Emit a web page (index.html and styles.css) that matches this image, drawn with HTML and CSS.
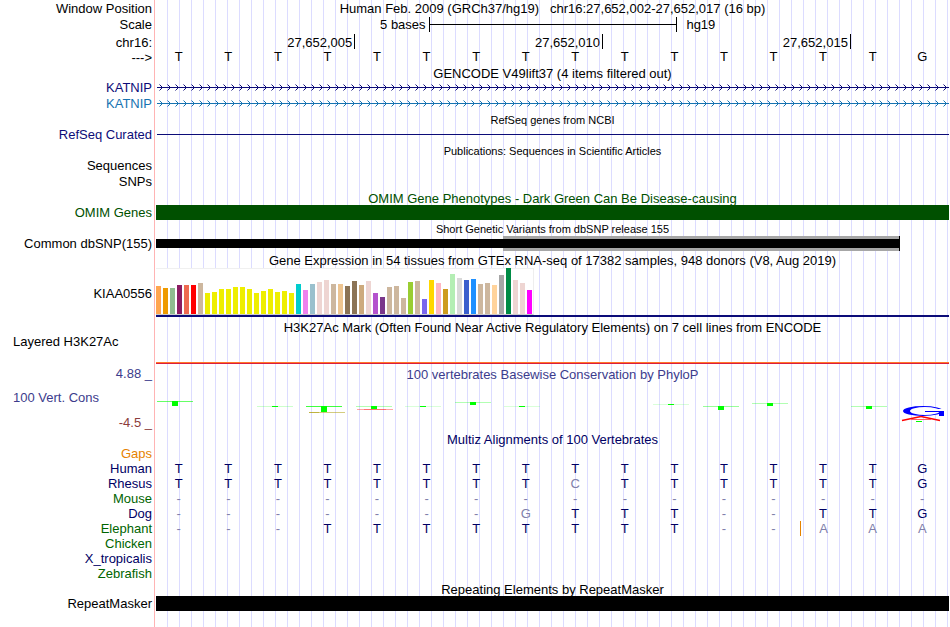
FILE: index.html
```html
<!DOCTYPE html>
<html lang="en">
  <head>
    <meta charset="UTF-8" />
    <meta name="viewport" content="width=device-width, initial-scale=1.0" />
    <title>Genome Browser hg19 chr16:27,652,002-27,652,017</title>
    <link rel="stylesheet" href="styles.css">
  </head>
  <body>
    <div class="browser">
      <div class="row">
        <div class="label title-label">Window Position</div>
        <div class="view title">Human Feb. 2009 (GRCh37/hg19)&nbsp;&nbsp; chr16:27,652,002-27,652,017 (16 bp)</div>
      </div>
      <div class="row scale-row">
        <div class="label">Scale</div>
        <div class="view scale">
          <span class="scale-size">5 bases</span>
          <span class="scale-bar"></span>
          <span class="scale-db">hg19</span>
        </div>
      </div>
      <div class="row ruler-row">
        <div class="label">chr16:</div>
        <div class="view ruler">
          <span>27,652,005</span>
          <span>27,652,010</span>
          <span>27,652,015</span>
          <span></span>
        </div>
      </div>
      <div class="row short">
        <div class="label title-label">---&gt;</div>
        <div class="view bases" data-seq="TTTTTTTTTTTTTTTG"></div>
      </div>

      <div class="row short gap">
        <div class="view title">GENCODE V49lift37 (4 items filtered out)</div>
      </div>
      <div class="row navy">
        <div class="label">KATNIP</div>
        <svg class="view gene" height="16">
          <defs>
            <pattern id="arrows" width="8" height="16" patternUnits="userSpaceOnUse">
              <path d="M3.5 4.5l3 3-3 3" fill="none" stroke="#0c0c78" />
            </pattern>
          </defs>
          <rect x="1" y="7" width="100%" height="1" fill="#0c0c78" />
          <rect width="100%" height="16" fill="url(#arrows)" />
        </svg>
      </div>
      <div class="row blue">
        <div class="label">KATNIP</div>
        <svg class="view gene" height="16">
          <defs>
            <pattern id="arrowsBlue" width="8" height="16" patternUnits="userSpaceOnUse">
              <path d="M3.5 4.5l3 3-3 3" fill="none" stroke="#1673b1" />
            </pattern>
          </defs>
          <rect x="1" y="7" width="100%" height="1" fill="#1673b1" />
          <rect width="100%" height="16" fill="url(#arrowsBlue)" />
        </svg>
      </div>

      <div class="row short">
        <div class="view title small">RefSeq genes from NCBI</div>
      </div>
      <div class="row short navy">
        <div class="label">RefSeq Curated</div>
        <div class="view"><div class="intron"></div></div>
      </div>

      <div class="row short gap">
        <div class="view title small">Publications: Sequences in Scientific Articles</div>
      </div>
      <div class="row"><div class="label">Sequences</div></div>
      <div class="row"><div class="label">SNPs</div></div>

      <div class="row short green">
        <div class="view title">OMIM Gene Phenotypes - Dark Green Can Be Disease-causing</div>
      </div>
      <div class="row short green">
        <div class="label">OMIM Genes</div>
        <div class="view block green-block"></div>
      </div>

      <div class="row short gap">
        <div class="view title small">Short Genetic Variants from dbSNP release 155</div>
      </div>
      <div class="row short">
        <div class="label">Common dbSNP(155)</div>
        <div class="view snp">
          <div class="snp-left"></div>
          <div class="snp-right"></div>
        </div>
      </div>

      <div class="row short gap">
        <div class="view title">Gene Expression in 54 tissues from GTEx RNA-seq of 17382 samples, 948 donors (V8, Aug 2019)</div>
      </div>
      <div class="row gtex">
        <div class="label">KIAA0556</div>
        <div class="view gtex-view">
          <div class="tissues" id="tissues"></div>
        </div>
      </div>

      <div class="row short gap-lg">
        <div class="view title">H3K27Ac Mark (Often Found Near Active Regulatory Elements) on 7 cell lines from ENCODE</div>
      </div>
      <div class="row histone">
        <div class="label left">Layered H3K27Ac</div>
        <div class="view histone-view"></div>
      </div>

      <div class="row short gap-lg purple">
        <div class="label">4.88 _</div>
        <div class="view title">100 vertebrates Basewise Conservation by PhyloP</div>
      </div>
      <div class="row cons purple">
        <div class="cons-labels">
          <div class="label left">100 Vert. Cons</div>
          <div class="label red">-4.5 _</div>
        </div>
        <svg class="view" height="50" viewBox="0 0 793 50" preserveAspectRatio="none">
          <g id="logo"></g>
          <!-- last base, G over A -->
          <ellipse cx="767" cy="30" rx="20" ry="5" fill="#00f" />
          <ellipse cx="769" cy="30" rx="15" ry="4" fill="#fff" />
          <rect x="777" y="28" width="12" height="2" fill="#fff" />
          <rect x="769" y="30" width="19" height="1" fill="#00f" />
          <rect x="783" y="30" width="5" height="5" fill="#00f" />
          <line x1="746" y1="39.5" x2="765" y2="35.5" stroke="#f00" stroke-width="1.4" />
          <line x1="765" y1="35.5" x2="784" y2="39.5" stroke="#f00" stroke-width="1.4" />
          <rect x="755" y="38" width="20" height="1" fill="#ff6060" />
          <rect x="760" y="40" width="6" height="1" fill="#0f0" />
        </svg>
      </div>

      <div class="row short dark">
        <div class="view title">Multiz Alignments of 100 Vertebrates</div>
      </div>
      <div class="row short orange"><div class="label">Gaps</div></div>
      <div class="row short dark">
        <div class="label">Human</div>
        <div class="view bases" data-seq="TTTTTTTTTTTTTTTG"></div>
      </div>
      <div class="row short dark">
        <div class="label">Rhesus</div>
        <div class="view bases" data-seq="TTTTTTTTcTTTTTTG"></div>
      </div>
      <div class="row short leaf">
        <div class="label">Mouse</div>
        <div class="view bases" data-seq="----------------"></div>
      </div>
      <div class="row short dark">
        <div class="label">Dog</div>
        <div class="view bases" data-seq="-------gTTT--TTG"></div>
      </div>
      <div class="row short leaf">
        <div class="label">Elephant</div>
        <div class="view bases" data-seq="---TTTTTTTT--|aaa"></div>
      </div>
      <div class="row short leaf"><div class="label">Chicken</div></div>
      <div class="row short dark"><div class="label">X_tropicalis</div></div>
      <div class="row short leaf"><div class="label">Zebrafish</div></div>

      <div class="row short">
        <div class="view title">Repeating Elements by RepeatMasker</div>
      </div>
      <div class="row short">
        <div class="label">RepeatMasker</div>
        <div class="view block"></div>
      </div>
    </div>

    <script>
// lower case = differs from human, | = insert before the next base
document.querySelectorAll(".bases").forEach((row) => {
  let str = "";
  let insert = "";
  for (const c of row.dataset.seq) {
    if (c == "|") {
      insert = " insert";
      continue;
    }
    const type = c == "-" || c != c.toUpperCase() ? "diff" : "same";
    str += `<span class="${type}${insert}">${c.toUpperCase()}</span>`;
    insert = "";
  }
  row.innerHTML = str;
});

const tissues = [
  [28, "#ffa54f"], [26, "#ee9a00"], [26, "#8fbc8f"], [29, "#8b1c62"],
  [29, "#ee6a50"], [29, "#ff0000"], [31, "#cdb79e"], [21, "#eeee00"],
  [22, "#eeee00"], [25, "#eeee00"], [25, "#eeee00"], [27, "#eeee00"],
  [27, "#eeee00"], [25, "#eeee00"], [21, "#eeee00"], [23, "#eeee00"],
  [25, "#eeee00"], [22, "#eeee00"], [23, "#eeee00"], [21, "#eeee00"],
  [30, "#00cdcd"], [24, "#ee82ee"], [30, "#9ac0cd"], [32, "#eed5d2"],
  [34, "#eed5d2"], [30, "#cdb79e"], [30, "#eec591"], [28, "#8b7355"],
  [33, "#8b7355"], [29, "#cdaa7d"], [33, "#eed5d2"], [21, "#b452cd"],
  [17, "#7a378b"], [27, "#cdb79e"], [28, "#cdb79e"], [16, "#cdb79e"],
  [32, "#9acd32"], [33, "#cdb79e"], [15, "#7a67ee"], [34, "#ffd700"],
  [31, "#ffb6c1"], [25, "#cd9b1d"], [40, "#b4eeb4"], [36, "#d9d9d9"],
  [34, "#3a5fcd"], [35, "#1e90ff"], [30, "#cdb79e"], [31, "#cdb79e"],
  [29, "#ffd39b"], [39, "#a6a6a6"], [46, "#008b45"], [34, "#eed5d2"],
  [31, "#eed5d2"], [24, "#ff00ff"],
];
document.getElementById("tissues").innerHTML = tissues
  .map(([h, color]) => `<i style="height:${h}px;background:${color}"></i>`)
  .join("");

// x, y, stem height, bar opacity
const marks = [
  [1, 20, 5, 0.6], [101, 25, 1, 0.2], [150, 25, 6, 0.75], [200, 25, 3, 0.3],
  [249, 25, 1, 0.15], [299, 21, 3, 0.3], [348, 25, 1, 0.15], [497, 23, 1, 0.15],
  [547, 25, 4, 0.4], [596, 22, 3, 0.3], [695, 25, 3, 0.3],
];
let logoStr = marks
  .map(
    ([x, y, h, o]) => `
    <rect x="${x}" y="${y}" width="36" height="1" fill="#0f0" opacity="${o}" />
    <rect x="${x + 15}" y="${y}" width="6" height="${h}" fill="#0f0" />`
  )
  .join("");
logoStr += `
    <rect x="153" y="31" width="36" height="1" fill="#a90" opacity=".5" />
    <rect x="153" y="31" width="10" height="1" fill="#a90" opacity=".5" />
    <rect x="201" y="28" width="36" height="1" fill="#f00" opacity=".35" />
    <rect x="208" y="28" width="22" height="1" fill="#f00" opacity=".3" />`;
document.getElementById("logo").innerHTML = logoStr;
    </script>
  </body>
</html>
```

FILE: styles.css
```css
body {
    margin: 0;
    background: #fff;
    color: #000;
    font-family: "Liberation Sans", Arial, sans-serif;
    font-size: 13px;
}
/* pink divider + guide lines every 12px */
.browser {
    min-height: 100vh;
    padding-right: 1px;
    box-sizing: border-box;
    background:
        linear-gradient(#ffb4b4, #ffb4b4) 154px 0 / 1px 100% no-repeat,
        repeating-linear-gradient(to right, transparent 0 11px, #dcdcff 11px 12px) 156px 0 no-repeat;
}
.row {
    display: grid;
    grid-template-columns: 152px 1fr;
    column-gap: 4px;
    height: 16px;
    line-height: 16px;
    white-space: nowrap;
}
.short {
    height: 15px;
    line-height: 15px;
}
.gap {
    margin-top: 1px;
}
.gap-lg {
    margin-top: 2px;
}
.label {
    text-align: right;
}
.left {
    text-align: left;
    padding-left: 13px;
}
.view {
    grid-column: 2;
    width: 100%;
    min-width: 0;
}
.title {
    text-align: center;
}
.title,
.title-label {
    padding-top: 1px;
}
.small {
    font-size: 11px;
}

.navy { color: #0c0c78; }
.blue { color: #1673b1; }
.green { color: #005000; }
.purple { color: #3c3c8c; }
.red { color: #8c3c3c; }
.dark { color: #000064; }
.leaf { color: #006400; }
.orange { color: #e68200; }

.scale-row {
    height: 17px;
    line-height: 18px;
}
.scale {
    display: grid;
    grid-template-columns: 11fr 10fr 11fr;
}
.scale-size {
    text-align: right;
    padding-right: 3px;
}
.scale-db {
    padding-left: 10px;
}
.scale-bar {
    height: 15px;
    margin: 1px -1px 0 0;
    border: solid #000;
    border-width: 0 1px;
    background: linear-gradient(#000, #000) 0 7px / 100% 1px no-repeat;
}
.ruler-row {
    padding-top: 1px;
    box-sizing: border-box;
    line-height: 18px;
}
.ruler {
    display: grid;
    grid-template-columns: 4fr 5fr 5fr 2fr;
}
.ruler span {
    height: 15px;
    text-align: right;
    padding-right: 2px;
}
.ruler span + span {
    border-left: 1px solid #000;
}
.bases {
    display: grid;
    grid-template-columns: repeat(16, 1fr);
    text-align: center;
}
.bases span {
    padding-right: 4px;
}
.bases .diff {
    color: #8080aa;
}
.leaf .same {
    color: #000064;
}
.bases .insert {
    border-left: 1px solid #e68200;
}

.gene {
    display: block;
}
.intron {
    height: 1px;
    margin: 7px 0 0 1px;
    background: #0c0c78;
}
.block {
    background: #000;
}
.green-block {
    background: #005000;
}
.snp {
    display: grid;
    grid-template-columns: 347fr 397fr 49fr;
}
.snp-left {
    margin: 3px 0;
    background: #000;
}
.snp-right {
    border-right: 1px solid #000;
    background: linear-gradient(#a6a6a6 3px, #000 3px 12px, #a6a6a6 12px);
}

.gtex {
    height: 50px;
    line-height: 54px;
}
.gtex-view {
    display: flex;
    align-items: flex-end;
    box-sizing: border-box;
    height: 50px;
    border-bottom: 2px solid #0c0c78;
}
.tissues {
    display: flex;
    align-items: flex-end;
    gap: 2px;
    height: 46px;
    padding-right: 1px;
    background: #fff;
    border-bottom: 1px solid #ccc;
    border-right: 1px solid #eee;
    box-shadow: inset 0 1px #f0f0f0;
}
.tissues i {
    width: 5px;
}
.histone {
    height: 30px;
    line-height: 15px;
}
.histone-view {
    box-sizing: border-box;
    border-bottom: 1px solid #dc1e3c;
    box-shadow: inset 0 -1px #ff7828;
}
.cons {
    height: 50px;
}
.cons-labels {
    display: flex;
    flex-direction: column;
    gap: 9px;
    padding-top: 9px;
}
```
